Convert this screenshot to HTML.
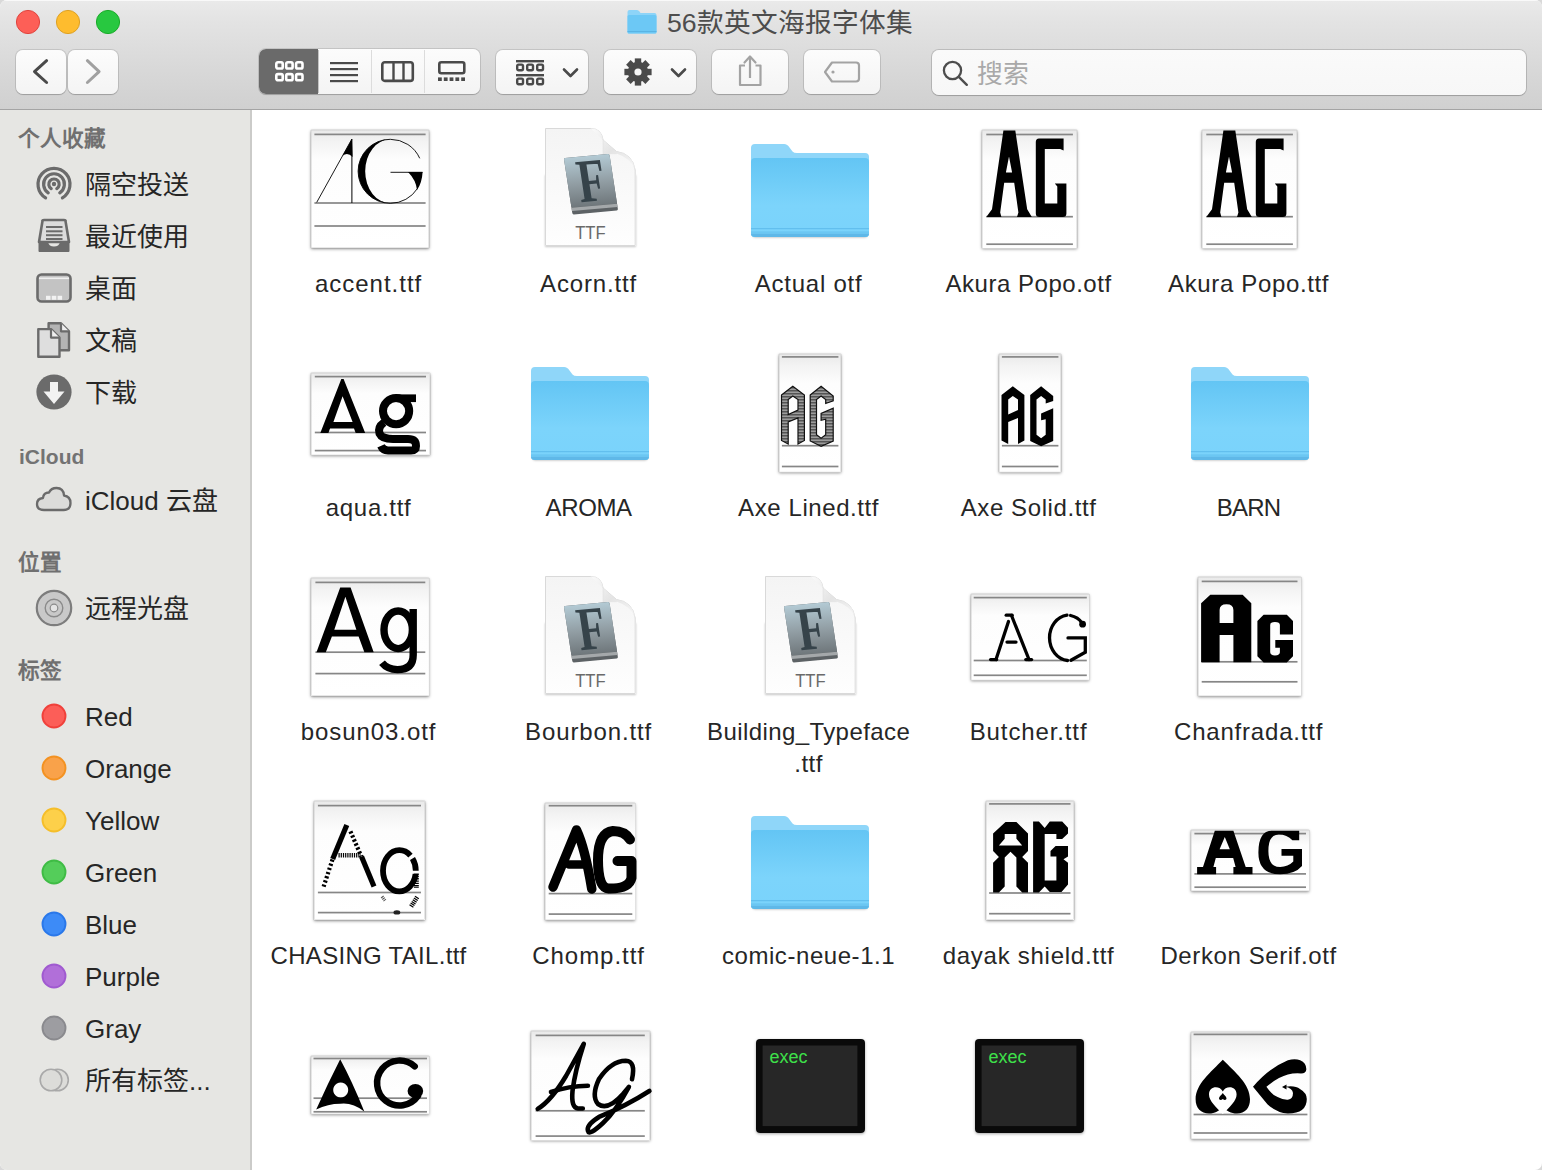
<!DOCTYPE html><html lang="zh-CN"><head><meta charset="utf-8"><title>Finder</title>
<style>
*{margin:0;padding:0;box-sizing:border-box}
html,body{width:1542px;height:1170px;overflow:hidden;background:#d9d9d9}
body{position:relative;font-family:"Liberation Sans", sans-serif;color:#222}
.win{position:absolute;left:0;top:0;width:1542px;height:1170px;border-radius:7px;overflow:hidden;background:#fff}
.a{position:absolute}
svg{position:absolute;overflow:visible}
.tb{left:0;top:0;width:1542px;height:110px;background:linear-gradient(#eaeaea 0,#e3e3e3 20%,#d9d9d9 60%,#d0d0d0 100%);border-bottom:1px solid #a4a4a4;box-shadow:inset 0 1px 0 rgba(255,255,255,.7)}
.btn{position:absolute;background:linear-gradient(#fcfcfc,#f4f4f4);border-radius:7px;box-shadow:0 0 0 1px rgba(0,0,0,.11),0 1px 1px rgba(0,0,0,.16)}
.sb{left:0;top:110px;width:252px;height:1060px;background:#e6e6e3;border-right:2px solid #cbcbc9}
.sh{position:absolute;left:18px;font-size:21.6px;font-weight:bold;color:#707070;line-height:24px;white-space:nowrap}
.si{position:absolute;left:85px;font-size:26px;color:#262626;line-height:30px;white-space:nowrap}
.lb{position:absolute;width:260px;text-align:center;font-size:24px;color:#262626;line-height:32px;white-space:nowrap}
</style></head><body><div class="win">
<div class="a tb"></div>
<svg style="left:15px;top:9px" width="26" height="26" viewBox="0 0 26 26" ><circle cx="13" cy="13" r="11.6" fill="#fd5f57" stroke="#e0443e" stroke-width="1"/></svg>
<svg style="left:55px;top:9px" width="26" height="26" viewBox="0 0 26 26" ><circle cx="13" cy="13" r="11.6" fill="#febc2e" stroke="#dea123" stroke-width="1"/></svg>
<svg style="left:95px;top:9px" width="26" height="26" viewBox="0 0 26 26" ><circle cx="13" cy="13" r="11.6" fill="#28c840" stroke="#1aab29" stroke-width="1"/></svg>
<svg style="left:626px;top:9px" width="32" height="26" viewBox="0 0 32 26" ><path d="M1.5,3 Q1.5,1 3.5,1 H11 Q12.5,1 13.5,2.5 L14.5,4 H28.5 Q30.5,4 30.5,6 V23 Q30.5,24.5 29,24.5 H3 Q1.5,24.5 1.5,23 Z" fill="#8dd4f8"/><path d="M1.5,7.5 Q1.5,6 3,6 H29 Q30.5,6 30.5,7.5 V23 Q30.5,24.5 29,24.5 H3 Q1.5,24.5 1.5,23 Z" fill="#6cc8f5"/><rect x="1.5" y="22" width="29" height="1" fill="#5ab4e4"/></svg>
<div class="a" style="left:667px;top:6px;font-size:26.7px;line-height:34px;color:#4d4d4d;white-space:nowrap">56款英文海报字体集</div>
<div class="btn" style="left:16px;top:50px;width:50px;height:44px;"></div>
<div class="btn" style="left:68px;top:50px;width:50px;height:44px;"></div>
<svg style="left:16px;top:50px" width="50" height="44" viewBox="0 0 50 44" ><path d="M30.6,10.7 L18.5,21.6 L30.6,32.5" fill="none" stroke="#4a4a4a" stroke-width="3" stroke-linecap="round" stroke-linejoin="round"/></svg>
<svg style="left:68px;top:50px" width="50" height="44" viewBox="0 0 50 44" ><path d="M19.4,10.7 L31.1,21.6 L19.4,32.5" fill="none" stroke="#a0a0a0" stroke-width="3" stroke-linecap="round" stroke-linejoin="round"/></svg>
<div class="btn" style="left:259px;top:49px;width:221px;height:45px;"></div>
<div class="a" style="left:259px;top:49px;width:59px;height:45px;background:#6a6a6a;border-radius:7px 0 0 7px"></div>
<div class="a" style="left:371px;top:50px;width:1px;height:43px;background:#dcdcdc"></div>
<div class="a" style="left:424px;top:50px;width:1px;height:43px;background:#dcdcdc"></div>
<div class="a" style="left:318px;top:50px;width:1px;height:43px;background:#c4c4c4"></div>
<svg style="left:275px;top:61px" width="32" height="22" viewBox="0 0 32 22" ><rect x="1.3" y="1.3" width="6.4" height="6.2" rx="1.6" fill="none" stroke="#fff" stroke-width="2.6"/><rect x="11.200000000000001" y="1.3" width="6.4" height="6.2" rx="1.6" fill="none" stroke="#fff" stroke-width="2.6"/><rect x="21.1" y="1.3" width="6.4" height="6.2" rx="1.6" fill="none" stroke="#fff" stroke-width="2.6"/><rect x="1.3" y="13.100000000000001" width="6.4" height="6.2" rx="1.6" fill="none" stroke="#fff" stroke-width="2.6"/><rect x="11.200000000000001" y="13.100000000000001" width="6.4" height="6.2" rx="1.6" fill="none" stroke="#fff" stroke-width="2.6"/><rect x="21.1" y="13.100000000000001" width="6.4" height="6.2" rx="1.6" fill="none" stroke="#fff" stroke-width="2.6"/></svg>
<svg style="left:330px;top:62px" width="28" height="21" viewBox="0 0 28 21" ><rect x="0" y="0" width="28" height="2.2" fill="#4a4a4a"/><rect x="0" y="6" width="28" height="2.2" fill="#4a4a4a"/><rect x="0" y="12" width="28" height="2.2" fill="#4a4a4a"/><rect x="0" y="18" width="28" height="2.2" fill="#4a4a4a"/></svg>
<svg style="left:381px;top:61px" width="34" height="22" viewBox="0 0 34 22" ><rect x="1.3" y="1.3" width="30.5" height="18.6" rx="2.5" fill="none" stroke="#4a4a4a" stroke-width="2.6"/><rect x="11.3" y="1" width="2.4" height="19" fill="#4a4a4a"/><rect x="21.3" y="1" width="2.4" height="19" fill="#4a4a4a"/></svg>
<svg style="left:438px;top:61px" width="28" height="21" viewBox="0 0 28 21" ><rect x="1.3" y="1.3" width="25" height="11" rx="2" fill="none" stroke="#4a4a4a" stroke-width="2.6"/><rect x="0.0" y="16.4" width="3.8" height="3.6" fill="#4a4a4a"/><rect x="5.8" y="16.4" width="3.8" height="3.6" fill="#4a4a4a"/><rect x="11.6" y="16.4" width="3.8" height="3.6" fill="#4a4a4a"/><rect x="17.4" y="16.4" width="3.8" height="3.6" fill="#4a4a4a"/><rect x="23.2" y="16.4" width="3.8" height="3.6" fill="#4a4a4a"/></svg>
<div class="btn" style="left:496px;top:50px;width:92px;height:44px;"></div>
<svg style="left:516px;top:60px" width="28" height="26" viewBox="0 0 28 26" ><rect x="0" y="0" width="28" height="2.4" fill="#4a4a4a"/><rect x="0" y="14" width="28" height="2.4" fill="#4a4a4a"/><rect x="1.2" y="4.6" width="5.8" height="5.6" rx="1.4" fill="none" stroke="#4a4a4a" stroke-width="2.4"/><rect x="11.2" y="4.6" width="5.8" height="5.6" rx="1.4" fill="none" stroke="#4a4a4a" stroke-width="2.4"/><rect x="21.2" y="4.6" width="5.8" height="5.6" rx="1.4" fill="none" stroke="#4a4a4a" stroke-width="2.4"/><rect x="1.2" y="18.6" width="5.8" height="5.6" rx="1.4" fill="none" stroke="#4a4a4a" stroke-width="2.4"/><rect x="11.2" y="18.6" width="5.8" height="5.6" rx="1.4" fill="none" stroke="#4a4a4a" stroke-width="2.4"/><rect x="21.2" y="18.6" width="5.8" height="5.6" rx="1.4" fill="none" stroke="#4a4a4a" stroke-width="2.4"/></svg>
<svg style="left:562px;top:67px" width="18" height="12" viewBox="0 0 18 12" ><path d="M2,2.5 L8.5,9 L15,2.5" fill="none" stroke="#4a4a4a" stroke-width="2.6" stroke-linecap="round" stroke-linejoin="round"/></svg>
<div class="btn" style="left:604px;top:50px;width:92px;height:44px;"></div>
<svg style="left:623px;top:57px" width="30" height="30" viewBox="0 0 30 30" ><circle cx="15" cy="15" r="10.2" fill="#4a4a4a"/><rect x="11.8" y="1.4000000000000004" width="6.4" height="6" fill="#4a4a4a" transform="rotate(0 15 15)"/><rect x="11.8" y="1.4000000000000004" width="6.4" height="6" fill="#4a4a4a" transform="rotate(45 15 15)"/><rect x="11.8" y="1.4000000000000004" width="6.4" height="6" fill="#4a4a4a" transform="rotate(90 15 15)"/><rect x="11.8" y="1.4000000000000004" width="6.4" height="6" fill="#4a4a4a" transform="rotate(135 15 15)"/><rect x="11.8" y="1.4000000000000004" width="6.4" height="6" fill="#4a4a4a" transform="rotate(180 15 15)"/><rect x="11.8" y="1.4000000000000004" width="6.4" height="6" fill="#4a4a4a" transform="rotate(225 15 15)"/><rect x="11.8" y="1.4000000000000004" width="6.4" height="6" fill="#4a4a4a" transform="rotate(270 15 15)"/><rect x="11.8" y="1.4000000000000004" width="6.4" height="6" fill="#4a4a4a" transform="rotate(315 15 15)"/><circle cx="15" cy="15" r="3.6" fill="#f6f6f6"/></svg>
<svg style="left:670px;top:67px" width="18" height="12" viewBox="0 0 18 12" ><path d="M2,2.5 L8.5,9 L15,2.5" fill="none" stroke="#4a4a4a" stroke-width="2.6" stroke-linecap="round" stroke-linejoin="round"/></svg>
<div class="btn" style="left:712px;top:50px;width:76px;height:44px;"></div>
<svg style="left:736px;top:54px" width="28" height="34" viewBox="0 0 28 34" ><path d="M9,11.5 H4 V31 H24.5 V11.5 H19.5" fill="none" stroke="#a3a3a3" stroke-width="2.2" stroke-linejoin="round"/><path d="M14,24 V3" fill="none" stroke="#a3a3a3" stroke-width="2.2"/><path d="M8.5,8.5 L14,2.5 L19.5,8.5" fill="none" stroke="#a3a3a3" stroke-width="2.2" stroke-linecap="round" stroke-linejoin="round"/></svg>
<div class="btn" style="left:804px;top:50px;width:76px;height:44px;"></div>
<svg style="left:822px;top:60px" width="40" height="24" viewBox="0 0 40 24" ><path d="M10,2.5 H34 Q37,2.5 37,5.5 V18.5 Q37,21.5 34,21.5 H10 L3,12 Z" fill="none" stroke="#a3a3a3" stroke-width="2.2" stroke-linejoin="round"/><circle cx="11" cy="12" r="1.6" fill="#a3a3a3"/></svg>
<div class="a" style="left:932px;top:49.5px;width:594px;height:45.5px;border-radius:7px;background:linear-gradient(#fafafa,#f7f7f7);box-shadow:0 0 0 1px rgba(0,0,0,.15),0 1px 1px rgba(0,0,0,.12)"></div>
<svg style="left:940px;top:58px" width="30" height="30" viewBox="0 0 30 30" ><circle cx="12.5" cy="12.5" r="8.6" fill="none" stroke="#4d4d4d" stroke-width="2.3"/><path d="M18.8,18.8 L26.8,26.8" stroke="#4d4d4d" stroke-width="2.4" stroke-linecap="round"/></svg>
<div class="a" style="left:977px;top:56.5px;font-size:25.8px;line-height:34px;color:#a9a9a9;white-space:nowrap">搜索</div>
<div class="a sb"></div>
<div class="sh" style="top:127.0px">个人收藏</div>
<div class="si" style="top:170.0px">隔空投送</div>
<div class="si" style="top:222.0px">最近使用</div>
<div class="si" style="top:274.0px">桌面</div>
<div class="si" style="top:326.0px">文稿</div>
<div class="si" style="top:378.0px">下载</div>
<svg style="left:34px;top:164px" width="40" height="40" viewBox="0 0 40 40" ><g fill="none" stroke="#6b6b6b" stroke-width="3.2" stroke-linecap="round"><path d="M11.6,33.9 A16,16 0 1 1 28.4,33.9"/><path d="M14.2,28.8 A10.4,10.4 0 1 1 25.8,28.8"/><path d="M17.2,24.6 A5.2,5.2 0 1 1 22.8,24.6"/></g><circle cx="20" cy="20" r="2.2" fill="#6b6b6b"/></svg>
<svg style="left:36px;top:218px" width="36" height="36" viewBox="0 0 36 36" ><path d="M6.5,3 Q6.5,2 8,2 H28 Q29.5,2 29.5,3 L33,24 H3 Z" fill="#dcdcdc" stroke="#6b6b6b" stroke-width="2.6" stroke-linejoin="round"/><g fill="#6b6b6b"><rect x="10" y="8" width="16.5" height="2"/><rect x="10" y="12.3" width="16.5" height="2"/><rect x="10" y="16.2" width="16.5" height="2"/><rect x="10" y="20" width="16.5" height="2"/></g><path d="M2.5,24 H12 Q13,28.5 18,28.5 Q23,28.5 24,24 H33.5 V33 Q33.5,34 32.5,34 H3.5 Q2.5,34 2.5,33 Z" fill="#6b6b6b"/></svg>
<svg style="left:36px;top:273px" width="36" height="30" viewBox="0 0 36 30" ><rect x="1.5" y="1.5" width="33" height="27" rx="4" fill="#c3c3c3" stroke="#6b6b6b" stroke-width="2.6"/><rect x="3" y="4.5" width="30" height="1.6" fill="#f0f0f0"/><g fill="#f2f2f2"><rect x="10" y="22.8" width="4.5" height="4"/><rect x="15.8" y="22.8" width="4.5" height="4"/><rect x="21.6" y="22.8" width="4.5" height="4"/></g></svg>
<svg style="left:36px;top:322px" width="36" height="36" viewBox="0 0 36 36" ><path d="M12.6,1.3 H25 L33,9.3 V28.3 H12.6 Z" fill="#b4b4b4" stroke="#6b6b6b" stroke-width="2.4" stroke-linejoin="round"/><path d="M25,1.3 V9.3 H33" fill="#efefef" stroke="#6b6b6b" stroke-width="2.2" stroke-linejoin="round"/><path d="M2.3,7.1 H15 L23.5,15.6 V34.7 H2.3 Z" fill="#dedede" stroke="#6b6b6b" stroke-width="2.4" stroke-linejoin="round"/><path d="M15,7.1 V15.6 H23.5" fill="#efefef" stroke="#6b6b6b" stroke-width="2.2" stroke-linejoin="round"/></svg>
<svg style="left:35px;top:372.8px" width="38" height="38" viewBox="0 0 38 38" ><circle cx="19" cy="19" r="17.6" fill="#6b6b6b"/><path d="M15,9 H23 V18.5 H29.5 L19,31 L8.5,18.5 H15 Z" fill="#f2f2f2"/></svg>
<div class="sh" style="font-weight:bold;font-size:21px;left:19px;color:#737373;top:445.4px">iCloud</div>
<div class="si" style="top:485.8px">iCloud 云盘</div>
<svg style="left:35px;top:484px" width="38" height="30" viewBox="0 0 38 30" ><path d="M9,26 Q2,26 2,20 Q2,14.5 8,14 Q8.5,8.5 14,8.5 Q16,4 21.5,4 Q28.5,4 29,11.5 Q35.5,12.5 35.5,19 Q35.5,26 28.5,26 Z" fill="#dcdcda" stroke="#6b6b6b" stroke-width="2.3" stroke-linejoin="round"/></svg>
<div class="sh" style="top:551.1px">位置</div>
<div class="si" style="top:593.6px">远程光盘</div>
<svg style="left:35px;top:589px" width="38" height="38" viewBox="0 0 38 38" ><circle cx="19" cy="19" r="17.2" fill="#c9c9c9" stroke="#7d7d7d" stroke-width="2.2"/><circle cx="19" cy="19" r="8.8" fill="none" stroke="#8a8a8a" stroke-width="1.4"/><circle cx="19" cy="19" r="3.8" fill="#e4e4e4" stroke="#8a8a8a" stroke-width="1.2"/></svg>
<div class="sh" style="top:659.1px">标签</div>
<div class="si" style="top:701.6px">Red</div>
<svg style="left:41px;top:703.3px" width="26" height="26" viewBox="0 0 26 26" ><circle cx="13" cy="13" r="11.5" fill="#fc5e58" stroke="#f0413b" stroke-width="1.9"/></svg>
<div class="si" style="top:753.6px">Orange</div>
<svg style="left:41px;top:755.3px" width="26" height="26" viewBox="0 0 26 26" ><circle cx="13" cy="13" r="11.5" fill="#f9a24a" stroke="#f39222" stroke-width="1.9"/></svg>
<div class="si" style="top:805.6px">Yellow</div>
<svg style="left:41px;top:807.3px" width="26" height="26" viewBox="0 0 26 26" ><circle cx="13" cy="13" r="11.5" fill="#fdd04a" stroke="#f5be2a" stroke-width="1.9"/></svg>
<div class="si" style="top:857.6px">Green</div>
<svg style="left:41px;top:859.3px" width="26" height="26" viewBox="0 0 26 26" ><circle cx="13" cy="13" r="11.5" fill="#54cd5a" stroke="#3fbc45" stroke-width="1.9"/></svg>
<div class="si" style="top:909.6px">Blue</div>
<svg style="left:41px;top:911.3px" width="26" height="26" viewBox="0 0 26 26" ><circle cx="13" cy="13" r="11.5" fill="#3d8bf7" stroke="#2a78ea" stroke-width="1.9"/></svg>
<div class="si" style="top:961.6px">Purple</div>
<svg style="left:41px;top:963.3px" width="26" height="26" viewBox="0 0 26 26" ><circle cx="13" cy="13" r="11.5" fill="#b16fd9" stroke="#a05ad0" stroke-width="1.9"/></svg>
<div class="si" style="top:1013.6px">Gray</div>
<svg style="left:41px;top:1015.3px" width="26" height="26" viewBox="0 0 26 26" ><circle cx="13" cy="13" r="11.5" fill="#9d9da1" stroke="#8a8a8e" stroke-width="1.9"/></svg>
<div class="si" style="top:1065.6px">所有标签...</div>
<svg style="left:38px;top:1067.3px" width="34" height="26" viewBox="0 0 34 26" ><circle cx="19.5" cy="13" r="10.8" fill="#dcdcd9" stroke="#a9a9a9" stroke-width="1.6"/><circle cx="13" cy="13" r="10.8" fill="#dcdcd9" stroke="#a9a9a9" stroke-width="1.6"/></svg>
<svg width="0" height="0" style="position:absolute;left:0;top:0">
<defs>
<linearGradient id="pvg" x1="0" y1="0" x2="0" y2="1">
 <stop offset="0" stop-color="#e9e9e9"/><stop offset="0.1" stop-color="#f3f3f3"/><stop offset="0.25" stop-color="#fdfdfd"/><stop offset="1" stop-color="#ffffff"/>
</linearGradient>
<linearGradient id="fld" x1="0" y1="0" x2="0" y2="1">
 <stop offset="0" stop-color="#63c5f4"/><stop offset="0.6" stop-color="#7cd4fb"/><stop offset="1" stop-color="#7ad3fb"/>
</linearGradient>
<linearGradient id="book" x1="0" y1="0" x2="0" y2="1">
 <stop offset="0" stop-color="#b3cad4"/><stop offset="0.55" stop-color="#909ca2"/><stop offset="1" stop-color="#6f777b"/>
</linearGradient>
<linearGradient id="page" x1="0" y1="0" x2="0" y2="1">
 <stop offset="0" stop-color="#f4f4f4"/><stop offset="1" stop-color="#fefefe"/>
</linearGradient>
<linearGradient id="curl" x1="0" y1="0" x2="1" y2="1">
 <stop offset="0" stop-color="#fbfbfb"/><stop offset="0.5" stop-color="#e2e2e2"/><stop offset="1" stop-color="#f6f6f6"/>
</linearGradient>
<pattern id="stripe" width="4" height="3" patternUnits="userSpaceOnUse">
 <rect width="4" height="3" fill="#9c9c9c"/><rect width="4" height="1.5" fill="#555"/>
</pattern>
</defs></svg>
<div class="a" style="left:311px;top:130px;width:118px;height:118px;box-shadow:0 1px 3px rgba(0,0,0,.45),0 0 1px rgba(0,0,0,.3)"></div><svg style="left:311px;top:130px" width="118" height="118" viewBox="0 0 118 118" ><rect x="0" y="0" width="118" height="118" fill="url(#pvg)"/><rect x="0.25" y="0.25" width="117.5" height="117.5" fill="none" stroke="#d0d0d0" stroke-width="0.5"/><rect x="3.4" y="3.55" width="111.20" height="1.7" fill="#868686"/><rect x="3.4" y="72.15" width="111.20" height="1.7" fill="#868686"/><rect x="3.4" y="95.15" width="111.20" height="1.7" fill="#868686"/><path d="M5.7,72.4 L40.9,9" stroke="#000" stroke-width="0.9" fill="none"/><path d="M40.9,9 V73" stroke="#000" stroke-width="1" fill="none"/><path d="M40.9,9 L31.5,25.8 Q36.5,21.5 41.6,27 Z" fill="#000"/><ellipse cx="79.3" cy="41.3" rx="32.2" ry="32" fill="none" stroke="#000" stroke-width="0.9" stroke-dasharray="170 30" stroke-dashoffset="-18"/><path d="M79.3,9.3 A32.2,32 0 0 0 79.3,73.3 A24.8,31.6 0 0 1 79.3,9.3 Z" fill="#000"/><path d="M79.5,42.3 H111.5" stroke="#000" stroke-width="0.9"/><path d="M97,42 H111.6 Q111,53 106,60 Q105,50 97,42 Z" fill="#000"/></svg>
<div class="a" style="left:545px;top:174px;width:91px;height:72px;box-shadow:0 1px 2px rgba(0,0,0,.22)"></div><svg style="left:545px;top:128px" width="91" height="118" viewBox="0 0 91 118" ><path d="M0.5,0.5 H45.8 Q56.5,0.5 58.1,12 L71.5,23.5 Q87.5,25.5 90.2,42 V117.5 H0.5 Z" fill="url(#page)" stroke="#d9d9d9" stroke-width="1"/><path d="M45.8,0.5 Q56.5,0.5 58.1,12 L71.5,23.5 Q87.5,25.5 90.2,42 Q86,30 72,25.7 H58.1 V12 Z" fill="url(#curl)" opacity="0.9"/><path d="M58.1,12 V25.7 H71.5" fill="none" stroke="#e2e2e2" stroke-width="0.8"/><g transform="matrix(0.456,-0.04,0.087,0.565,18.8,30)"><rect x="0" y="0" width="100" height="100" rx="3" fill="#5d6265"/><rect x="0" y="0" width="100" height="88" rx="3" fill="url(#book)"/><rect x="0" y="88" width="100" height="6" fill="#a4a8aa"/><text x="52" y="80" text-anchor="middle" font-family="Liberation Serif" font-weight="bold" font-size="108" fill="#36434a" transform="translate(52 0) scale(0.92 1) translate(-52 0)">F</text></g><text x="30.2" y="111" textLength="30.5" lengthAdjust="spacingAndGlyphs" font-family="Liberation Sans" font-size="18.5" fill="#6a6a6a">TTF</text></svg>
<div class="a" style="left:752px;top:158px;width:116px;height:79px;border-radius:4px;box-shadow:0 1px 2px rgba(0,0,0,.18)"></div><svg style="left:751px;top:144px" width="118" height="93" viewBox="0 0 118 93" ><path d="M0,4 Q0,0 4,0 H33 Q36.5,0 38.5,3.5 L41.5,7.5 Q43,9 46,9 H114 Q118,9 118,13 V89 Q118,93 114,93 H4 Q0,93 0,89 Z" fill="#8fd6f9"/><path d="M0,18 Q0,14 4,14 H114 Q118,14 118,18 V89 Q118,93 114,93 H4 Q0,93 0,89 Z" fill="url(#fld)"/><rect x="0" y="84" width="118" height="1.2" fill="#62bfee"/><rect x="0" y="87.5" width="118" height="1.2" fill="#66c2f0"/><path d="M0,89.5 H118 Q118,93 114,93 H4 Q0,93 0,89.5 Z" fill="#5fb8e8"/></svg>
<div class="a" style="left:982px;top:129.5px;width:95px;height:118.5px;box-shadow:0 1px 3px rgba(0,0,0,.45),0 0 1px rgba(0,0,0,.3)"></div><svg style="left:982px;top:129.5px" width="95" height="118.5" viewBox="0 0 95 118.5" ><rect x="0" y="0" width="95" height="118.5" fill="url(#pvg)"/><rect x="0.25" y="0.25" width="94.5" height="118.0" fill="none" stroke="#d0d0d0" stroke-width="0.5"/><rect x="4.3" y="3.65" width="86.60" height="1.7" fill="#868686"/><rect x="4.3" y="85.85" width="86.60" height="1.7" fill="#868686"/><rect x="4.3" y="113.35" width="86.60" height="1.7" fill="#868686"/><path d="M21.4,0.6 H33.3 L45.2,79.3 L49.8,87 H35 L36.4,82.4 L32.2,52.8 H22.2 L18.2,82.4 L19.4,87 H4.3 L10,79.3 Z M27,26.5 L30.1,42.6 H23.9 Z" fill="#000" fill-rule="evenodd"/><path d="M57,8.5 H81.6 V20.5 L78.2,19 H62.8 V73.4 H75.3 V56.5 L72.8,53.4 H84.4 V83.5 Q84.4,87 80.8,87 H57.4 Q53.8,87 53.8,83.5 V12 Q53.8,8.5 57,8.5 Z" fill="#000"/></svg>
<div class="a" style="left:1202px;top:129.5px;width:95px;height:118.5px;box-shadow:0 1px 3px rgba(0,0,0,.45),0 0 1px rgba(0,0,0,.3)"></div><svg style="left:1202px;top:129.5px" width="95" height="118.5" viewBox="0 0 95 118.5" ><rect x="0" y="0" width="95" height="118.5" fill="url(#pvg)"/><rect x="0.25" y="0.25" width="94.5" height="118.0" fill="none" stroke="#d0d0d0" stroke-width="0.5"/><rect x="4.3" y="3.65" width="86.60" height="1.7" fill="#868686"/><rect x="4.3" y="85.85" width="86.60" height="1.7" fill="#868686"/><rect x="4.3" y="113.35" width="86.60" height="1.7" fill="#868686"/><path d="M21.4,0.6 H33.3 L45.2,79.3 L49.8,87 H35 L36.4,82.4 L32.2,52.8 H22.2 L18.2,82.4 L19.4,87 H4.3 L10,79.3 Z M27,26.5 L30.1,42.6 H23.9 Z" fill="#000" fill-rule="evenodd"/><path d="M57,8.5 H81.6 V20.5 L78.2,19 H62.8 V73.4 H75.3 V56.5 L72.8,53.4 H84.4 V83.5 Q84.4,87 80.8,87 H57.4 Q53.8,87 53.8,83.5 V12 Q53.8,8.5 57,8.5 Z" fill="#000"/></svg>
<div class="a" style="left:311px;top:372.7px;width:118.5px;height:82.2px;box-shadow:0 1px 3px rgba(0,0,0,.45),0 0 1px rgba(0,0,0,.3)"></div><svg style="left:311px;top:372.7px" width="118.5" height="82.2" viewBox="0 0 118.5 82.2" ><rect x="0" y="0" width="118.5" height="82.2" fill="url(#pvg)"/><rect x="0.25" y="0.25" width="118.0" height="81.7" fill="none" stroke="#d0d0d0" stroke-width="0.5"/><rect x="3.8" y="2.75" width="111.20" height="1.7" fill="#868686"/><rect x="3.8" y="58.65" width="111.20" height="1.7" fill="#868686"/><rect x="3.8" y="76.75" width="111.20" height="1.7" fill="#868686"/><path d="M30.3,5.9 H32.6 L54.2,59.9 H44.7 L43,55.4 H19 L17.4,59.9 H9.3 Z M31.6,23.2 L41.6,49 H22.4 Z" fill="#000" fill-rule="evenodd"/><circle cx="85.1" cy="38.1" r="13.1" fill="none" stroke="#000" stroke-width="8"/><rect x="84.6" y="21.4" width="20.4" height="7.7" fill="#000"/><path d="M73,49.5 Q66.5,54 68.5,60.5 Q71,66 82,66 H97 Q105,66 105,73 Q105,77.5 100,77.5 H77 Q72,77.5 70,73" fill="none" stroke="#000" stroke-width="8"/></svg>
<div class="a" style="left:532px;top:381.3px;width:116px;height:79px;border-radius:4px;box-shadow:0 1px 2px rgba(0,0,0,.18)"></div><svg style="left:531px;top:367.3px" width="118" height="93" viewBox="0 0 118 93" ><path d="M0,4 Q0,0 4,0 H33 Q36.5,0 38.5,3.5 L41.5,7.5 Q43,9 46,9 H114 Q118,9 118,13 V89 Q118,93 114,93 H4 Q0,93 0,89 Z" fill="#8fd6f9"/><path d="M0,18 Q0,14 4,14 H114 Q118,14 118,18 V89 Q118,93 114,93 H4 Q0,93 0,89 Z" fill="url(#fld)"/><rect x="0" y="84" width="118" height="1.2" fill="#62bfee"/><rect x="0" y="87.5" width="118" height="1.2" fill="#66c2f0"/><path d="M0,89.5 H118 Q118,93 114,93 H4 Q0,93 0,89.5 Z" fill="#5fb8e8"/></svg>
<div class="a" style="left:778.7px;top:353.6px;width:62px;height:118.3px;box-shadow:0 1px 3px rgba(0,0,0,.45),0 0 1px rgba(0,0,0,.3)"></div><svg style="left:778.7px;top:353.6px" width="62" height="118.3" viewBox="0 0 62 118.3" ><rect x="0" y="0" width="62" height="118.3" fill="url(#pvg)"/><rect x="0.25" y="0.25" width="61.5" height="117.8" fill="none" stroke="#d0d0d0" stroke-width="0.5"/><rect x="2.9" y="2.05" width="56.50" height="1.7" fill="#868686"/><rect x="2.9" y="90.85" width="56.50" height="1.7" fill="#868686"/><rect x="2.9" y="111.65" width="56.50" height="1.7" fill="#868686"/><path d="M2.5,41 L13.8,32.3 L25.4,41 V86.5 L19,90 V64 L9.2,68 V90 L2.5,86.5 Z M9.2,45.6 L13.8,42.1 L19,45.6 V56 L9.2,60.6 Z" fill="url(#stripe)" stroke="#111" stroke-width="1.2" fill-rule="evenodd"/><path d="M31.2,41 L42.1,32.3 L54.2,42.1 V46.9 L46.7,49.5 V45.6 L42.1,42.1 L37.5,45.6 V80.8 L42.1,84.2 L46.7,80.8 V65.2 L42.1,66.3 V59.4 L54.2,54.2 V87 L42.1,92.3 L31.2,87 Z" fill="url(#stripe)" stroke="#111" stroke-width="1.2"/></svg>
<div class="a" style="left:999px;top:353.6px;width:62px;height:118.3px;box-shadow:0 1px 3px rgba(0,0,0,.45),0 0 1px rgba(0,0,0,.3)"></div><svg style="left:999px;top:353.6px" width="62" height="118.3" viewBox="0 0 62 118.3" ><rect x="0" y="0" width="62" height="118.3" fill="url(#pvg)"/><rect x="0.25" y="0.25" width="61.5" height="117.8" fill="none" stroke="#d0d0d0" stroke-width="0.5"/><rect x="2.9" y="2.05" width="56.50" height="1.7" fill="#868686"/><rect x="2.9" y="90.85" width="56.50" height="1.7" fill="#868686"/><rect x="2.9" y="111.65" width="56.50" height="1.7" fill="#868686"/><path d="M2.5,41 L13.8,32.3 L25.4,41 V86.5 L19,90 V64 L9.2,68 V90 L2.5,86.5 Z M9.2,45.6 L13.8,42.1 L19,45.6 V56 L9.2,60.6 Z" fill="#000" fill-rule="evenodd"/><path d="M31.2,41 L42.1,32.3 L54.2,42.1 V46.9 L46.7,49.5 V45.6 L42.1,42.1 L37.5,45.6 V80.8 L42.1,84.2 L46.7,80.8 V65.2 L42.1,66.3 V59.4 L54.2,54.2 V87 L42.1,92.3 L31.2,87 Z" fill="#000"/></svg>
<div class="a" style="left:1192px;top:381.3px;width:116px;height:79px;border-radius:4px;box-shadow:0 1px 2px rgba(0,0,0,.18)"></div><svg style="left:1191px;top:367.3px" width="118" height="93" viewBox="0 0 118 93" ><path d="M0,4 Q0,0 4,0 H33 Q36.5,0 38.5,3.5 L41.5,7.5 Q43,9 46,9 H114 Q118,9 118,13 V89 Q118,93 114,93 H4 Q0,93 0,89 Z" fill="#8fd6f9"/><path d="M0,18 Q0,14 4,14 H114 Q118,14 118,18 V89 Q118,93 114,93 H4 Q0,93 0,89 Z" fill="url(#fld)"/><rect x="0" y="84" width="118" height="1.2" fill="#62bfee"/><rect x="0" y="87.5" width="118" height="1.2" fill="#66c2f0"/><path d="M0,89.5 H118 Q118,93 114,93 H4 Q0,93 0,89.5 Z" fill="#5fb8e8"/></svg>
<div class="a" style="left:310.6px;top:578.3px;width:118.4px;height:117.7px;box-shadow:0 1px 3px rgba(0,0,0,.45),0 0 1px rgba(0,0,0,.3)"></div><svg style="left:310.6px;top:578.3px" width="118.4" height="117.7" viewBox="0 0 118.4 117.7" ><rect x="0" y="0" width="118.4" height="117.7" fill="url(#pvg)"/><rect x="0.25" y="0.25" width="117.9" height="117.2" fill="none" stroke="#d0d0d0" stroke-width="0.5"/><rect x="4.4" y="3.55" width="109.90" height="1.7" fill="#868686"/><rect x="4.4" y="73.35" width="109.90" height="1.7" fill="#868686"/><rect x="4.4" y="94.75" width="109.90" height="1.7" fill="#868686"/><path d="M29.2,9.6 H39.6 L62.7,74.2 H53.4 L47.6,58.6 H20.9 L14.8,74.2 H5.5 Z M34.4,18.8 L45.4,51.8 H23.3 Z" fill="#000" fill-rule="evenodd"/><ellipse cx="87.2" cy="51.8" rx="14.2" ry="18.8" fill="none" stroke="#000" stroke-width="7.4"/><path d="M102.2,30.9 V77 Q102.2,91.6 86.5,91.6 Q76.5,91.6 71,84.8" fill="none" stroke="#000" stroke-width="7.4"/></svg>
<div class="a" style="left:545px;top:622px;width:91px;height:72px;box-shadow:0 1px 2px rgba(0,0,0,.22)"></div><svg style="left:545px;top:576px" width="91" height="118" viewBox="0 0 91 118" ><path d="M0.5,0.5 H45.8 Q56.5,0.5 58.1,12 L71.5,23.5 Q87.5,25.5 90.2,42 V117.5 H0.5 Z" fill="url(#page)" stroke="#d9d9d9" stroke-width="1"/><path d="M45.8,0.5 Q56.5,0.5 58.1,12 L71.5,23.5 Q87.5,25.5 90.2,42 Q86,30 72,25.7 H58.1 V12 Z" fill="url(#curl)" opacity="0.9"/><path d="M58.1,12 V25.7 H71.5" fill="none" stroke="#e2e2e2" stroke-width="0.8"/><g transform="matrix(0.456,-0.04,0.087,0.565,18.8,30)"><rect x="0" y="0" width="100" height="100" rx="3" fill="#5d6265"/><rect x="0" y="0" width="100" height="88" rx="3" fill="url(#book)"/><rect x="0" y="88" width="100" height="6" fill="#a4a8aa"/><text x="52" y="80" text-anchor="middle" font-family="Liberation Serif" font-weight="bold" font-size="108" fill="#36434a" transform="translate(52 0) scale(0.92 1) translate(-52 0)">F</text></g><text x="30.2" y="111" textLength="30.5" lengthAdjust="spacingAndGlyphs" font-family="Liberation Sans" font-size="18.5" fill="#6a6a6a">TTF</text></svg>
<div class="a" style="left:765px;top:622px;width:91px;height:72px;box-shadow:0 1px 2px rgba(0,0,0,.22)"></div><svg style="left:765px;top:576px" width="91" height="118" viewBox="0 0 91 118" ><path d="M0.5,0.5 H45.8 Q56.5,0.5 58.1,12 L71.5,23.5 Q87.5,25.5 90.2,42 V117.5 H0.5 Z" fill="url(#page)" stroke="#d9d9d9" stroke-width="1"/><path d="M45.8,0.5 Q56.5,0.5 58.1,12 L71.5,23.5 Q87.5,25.5 90.2,42 Q86,30 72,25.7 H58.1 V12 Z" fill="url(#curl)" opacity="0.9"/><path d="M58.1,12 V25.7 H71.5" fill="none" stroke="#e2e2e2" stroke-width="0.8"/><g transform="matrix(0.456,-0.04,0.087,0.565,18.8,30)"><rect x="0" y="0" width="100" height="100" rx="3" fill="#5d6265"/><rect x="0" y="0" width="100" height="88" rx="3" fill="url(#book)"/><rect x="0" y="88" width="100" height="6" fill="#a4a8aa"/><text x="52" y="80" text-anchor="middle" font-family="Liberation Serif" font-weight="bold" font-size="108" fill="#36434a" transform="translate(52 0) scale(0.92 1) translate(-52 0)">F</text></g><text x="30.2" y="111" textLength="30.5" lengthAdjust="spacingAndGlyphs" font-family="Liberation Sans" font-size="18.5" fill="#6a6a6a">TTF</text></svg>
<div class="a" style="left:970.9px;top:593.6px;width:118.5px;height:86.3px;box-shadow:0 1px 3px rgba(0,0,0,.45),0 0 1px rgba(0,0,0,.3)"></div><svg style="left:970.9px;top:593.6px" width="118.5" height="86.3" viewBox="0 0 118.5 86.3" ><rect x="0" y="0" width="118.5" height="86.3" fill="url(#pvg)"/><rect x="0.25" y="0.25" width="118.0" height="85.8" fill="none" stroke="#d0d0d0" stroke-width="0.5"/><rect x="2.7" y="2.75" width="113.10" height="1.7" fill="#868686"/><rect x="2.7" y="65.65" width="113.10" height="1.7" fill="#868686"/><rect x="2.7" y="80.45" width="113.10" height="1.7" fill="#868686"/><g fill="none" stroke="#000" stroke-width="3.3" stroke-linecap="round"><path d="M37.5,27.5 L25,65.5"/><path d="M40.5,21.5 L58,65.5"/><path d="M35.2,21.2 H41.2"/><path d="M19.6,65.6 H25.6"/><path d="M54.8,65.6 H60.6"/><path d="M36,48.1 H45"/><path d="M96,21.2 A20,22.8 0 0 0 96.5,66.5"/><path d="M99.6,21.5 Q107,23 111,29"/><path d="M97,43.9 H114.3 V58.3 L100,66.3"/></g><circle cx="111.6" cy="30.2" r="3.4" fill="#000"/></svg>
<div class="a" style="left:1197.8px;top:577.2px;width:103.5px;height:119.1px;box-shadow:0 1px 3px rgba(0,0,0,.45),0 0 1px rgba(0,0,0,.3)"></div><svg style="left:1197.8px;top:577.2px" width="103.5" height="119.1" viewBox="0 0 103.5 119.1" ><rect x="0" y="0" width="103.5" height="119.1" fill="url(#pvg)"/><rect x="0.25" y="0.25" width="103.0" height="118.6" fill="none" stroke="#d0d0d0" stroke-width="0.5"/><rect x="3.7" y="3.55" width="95.80" height="1.7" fill="#868686"/><rect x="3.7" y="83.95" width="95.80" height="1.7" fill="#868686"/><rect x="3.7" y="103.95" width="95.80" height="1.7" fill="#868686"/><path d="M3.1,85.2 V26.3 L12.3,17.7 H44.6 L53.3,26.3 V85.2 H35.4 V58 H21.6 V85.2 Z M21.6,45.9 V33 Q21.6,27.3 28.5,27.3 Q35.4,27.3 35.4,33 V45.9 Z" fill="#000" fill-rule="evenodd"/><path d="M65.6,37.7 H88.8 L95,43.9 V57.4 H81.9 V48 Q81.9,44.9 77,44.9 Q72.2,44.9 72.2,48 V75.3 Q72.2,78.4 77,78.4 Q81.9,78.4 81.9,75.3 V70.7 H77.3 V63.1 H95 V79.2 L88.8,85.4 H65.6 L59.4,79.2 V43.9 Z" fill="#000"/></svg>
<div class="a" style="left:314px;top:801.3px;width:111px;height:118.9px;box-shadow:0 1px 3px rgba(0,0,0,.45),0 0 1px rgba(0,0,0,.3)"></div><svg style="left:314px;top:801.3px" width="111" height="118.9" viewBox="0 0 111 118.9" ><rect x="0" y="0" width="111" height="118.9" fill="url(#pvg)"/><rect x="0.25" y="0.25" width="110.5" height="118.4" fill="none" stroke="#d0d0d0" stroke-width="0.5"/><rect x="3.9" y="3.75" width="103.10" height="1.7" fill="#868686"/><rect x="3.9" y="90.65" width="103.10" height="1.7" fill="#868686"/><rect x="3.9" y="110.75" width="103.10" height="1.7" fill="#868686"/><g fill="none" stroke="#000" stroke-width="5.2"><path d="M32.8,24 L18.7,58"/><path d="M18.5,58.5 L9.5,86" stroke-dasharray="2.2 2.2" stroke-width="4.2"/><path d="M36.4,30.3 L47.3,55.5" stroke-dasharray="2.4 2" stroke-width="4.2"/><path d="M47.5,55.5 L60,85.5"/><path d="M24.5,54.3 H47" stroke-dasharray="1.2 1" stroke-width="4.5"/><ellipse cx="85.4" cy="69.8" rx="16.4" ry="20.6" stroke-width="5.8" stroke-dasharray="96 3.5 14 3.5" stroke-dashoffset="-3.5"/><path d="M102.3,72.5 V87" stroke-width="5" stroke-dasharray="1.4 0.9"/><path d="M103.2,96.1 L96.7,106.2" stroke-dasharray="1.2 0.8" stroke-width="4.6"/><path d="M68,95.5 L71,99.5" stroke-dasharray="1.2 0.8" stroke-width="3.2" stroke="#555"/></g><ellipse cx="82.9" cy="111.4" rx="3.4" ry="2.2" fill="#222"/></svg>
<div class="a" style="left:544.7px;top:802.5px;width:90.8px;height:117.1px;box-shadow:0 1px 3px rgba(0,0,0,.45),0 0 1px rgba(0,0,0,.3)"></div><svg style="left:544.7px;top:802.5px" width="90.8" height="117.1" viewBox="0 0 90.8 117.1" ><rect x="0" y="0" width="90.8" height="117.1" fill="url(#pvg)"/><rect x="0.25" y="0.25" width="90.3" height="116.6" fill="none" stroke="#d0d0d0" stroke-width="0.5"/><rect x="3.7" y="1.85" width="83.60" height="1.7" fill="#868686"/><rect x="3.7" y="89.75" width="83.60" height="1.7" fill="#868686"/><rect x="3.7" y="110.25" width="83.60" height="1.7" fill="#868686"/><g fill="none" stroke="#000" stroke-linecap="round" stroke-linejoin="round"><path d="M8,84 Q20,55 31.5,27 Q40,45 46.8,86" stroke-width="9.5"/><path d="M24,61.5 H42" stroke-width="8.5"/><path d="M85,36.5 Q80,28 68,28 Q53,30 53,57 Q53,85 63.5,85.5 Q84,86 86.5,75 V58 H72.5" stroke-width="10"/></g></svg>
<div class="a" style="left:752px;top:829.5px;width:116px;height:79px;border-radius:4px;box-shadow:0 1px 2px rgba(0,0,0,.18)"></div><svg style="left:751px;top:815.5px" width="118" height="93" viewBox="0 0 118 93" ><path d="M0,4 Q0,0 4,0 H33 Q36.5,0 38.5,3.5 L41.5,7.5 Q43,9 46,9 H114 Q118,9 118,13 V89 Q118,93 114,93 H4 Q0,93 0,89 Z" fill="#8fd6f9"/><path d="M0,18 Q0,14 4,14 H114 Q118,14 118,18 V89 Q118,93 114,93 H4 Q0,93 0,89 Z" fill="url(#fld)"/><rect x="0" y="84" width="118" height="1.2" fill="#62bfee"/><rect x="0" y="87.5" width="118" height="1.2" fill="#66c2f0"/><path d="M0,89.5 H118 Q118,93 114,93 H4 Q0,93 0,89.5 Z" fill="#5fb8e8"/></svg>
<div class="a" style="left:985.8px;top:801.3px;width:88px;height:118.9px;box-shadow:0 1px 3px rgba(0,0,0,.45),0 0 1px rgba(0,0,0,.3)"></div><svg style="left:985.8px;top:801.3px" width="88" height="118.9" viewBox="0 0 88 118.9" ><rect x="0" y="0" width="88" height="118.9" fill="url(#pvg)"/><rect x="0.25" y="0.25" width="87.5" height="118.4" fill="none" stroke="#d0d0d0" stroke-width="0.5"/><rect x="3.1" y="2.05" width="81.40" height="1.7" fill="#868686"/><rect x="3.1" y="91.15" width="81.40" height="1.7" fill="#868686"/><rect x="3.1" y="111.85" width="81.40" height="1.7" fill="#868686"/><path d="M7.1,32.6 L19.5,21 H30.4 L42,32.6 V50 L36.2,55.9 L42,61.7 V91.5 H36.2 L30.4,85.6 V56.6 L24.5,50.8 L18.7,56.6 V85.6 L12.9,91.5 H7.1 V61.7 L12.9,55.9 L7.1,50 Z M18.7,33 H30.4 V37.7 L36.2,44.6 H12.9 L18.7,37.7 Z" fill="#000" fill-rule="evenodd"/><path d="M47.1,20.6 H52.9 L58.7,27.1 L63.8,20.6 H76.2 L82,26.8 V32.6 L76.2,38 H70.4 V33 H58.7 V79.5 H70.4 V55.5 H64.5 V50 L69.6,45 H82 V55.5 L77.5,58.2 L82,61.7 V83.5 L75.5,91.1 H63.8 L58.7,85.6 L52.9,91.5 H47.1 Z" fill="#000"/></svg>
<div class="a" style="left:1190.7px;top:830.2px;width:118.7px;height:61.1px;box-shadow:0 1px 3px rgba(0,0,0,.45),0 0 1px rgba(0,0,0,.3)"></div><svg style="left:1190.7px;top:830.2px" width="118.7" height="61.1" viewBox="0 0 118.7 61.1" ><rect x="0" y="0" width="118.7" height="61.1" fill="url(#pvg)"/><rect x="0.25" y="0.25" width="118.2" height="60.6" fill="none" stroke="#d0d0d0" stroke-width="0.5"/><rect x="3.4" y="2.75" width="111.60" height="1.7" fill="#868686"/><rect x="3.4" y="43.05" width="111.60" height="1.7" fill="#868686"/><rect x="3.4" y="56.35" width="111.60" height="1.7" fill="#868686"/><path d="M23.8,0.7 H42.4 L54.7,37 H61.5 V44.3 H42.4 V37 H44.6 L42.2,28 H24.8 L22.4,37 H25.1 V44.3 H6.1 V37 H12 Z M33.8,7 L38.8,19.2 H28.6 Z" fill="#000" fill-rule="evenodd"/><path d="M81,0.7 H108.2 V10.3 H101.4 Q96,4.4 87.8,4.4 Q77.4,4.4 77.4,21 Q77.4,37 89.2,37 Q97,37 102.3,31.6 V25.7 H90.5 V18.9 H111 V36.1 Q104,44.3 89.2,44.3 Q67.4,44.3 67.4,22.5 Q67.4,0.7 81,0.7 Z" fill="#000"/></svg>
<div class="a" style="left:310.7px;top:1056.3px;width:118.7px;height:58.2px;box-shadow:0 1px 3px rgba(0,0,0,.45),0 0 1px rgba(0,0,0,.3)"></div><svg style="left:310.7px;top:1056.3px" width="118.7" height="58.2" viewBox="0 0 118.7 58.2" ><rect x="0" y="0" width="118.7" height="58.2" fill="url(#pvg)"/><rect x="0.25" y="0.25" width="118.2" height="57.7" fill="none" stroke="#d0d0d0" stroke-width="0.5"/><rect x="2.5" y="1.65" width="113.50" height="1.7" fill="#868686"/><rect x="2.5" y="41.35" width="113.50" height="1.7" fill="#868686"/><rect x="2.5" y="54.95" width="113.50" height="1.7" fill="#868686"/><path d="M29.2,3.2 Q41,25 53.3,55.4 Q41,46 29.2,47.7 Q17,47.7 5.2,53.6 Q17,27 29.2,3.2 Z M29.7,26.5 A7.5,7.5 0 1 0 29.71,26.5 Z" fill="#000" fill-rule="evenodd"/><path d="M103.7,10.4 A22.5,22.5 0 1 0 107,40" fill="none" stroke="#000" stroke-width="6.5" stroke-linecap="round"/><ellipse cx="104.4" cy="35" rx="7.8" ry="7" fill="#000"/></svg>
<div class="a" style="left:530.6px;top:1030.6px;width:119px;height:109.7px;box-shadow:0 1px 3px rgba(0,0,0,.45),0 0 1px rgba(0,0,0,.3)"></div><svg style="left:530.6px;top:1030.6px" width="119" height="109.7" viewBox="0 0 119 109.7" ><rect x="0" y="0" width="119" height="109.7" fill="url(#pvg)"/><rect x="0.25" y="0.25" width="118.5" height="109.2" fill="none" stroke="#d0d0d0" stroke-width="0.5"/><rect x="4.6" y="3.55" width="109.20" height="1.7" fill="#868686"/><rect x="4.6" y="78.95" width="109.20" height="1.7" fill="#868686"/><rect x="4.6" y="104.25" width="109.20" height="1.7" fill="#868686"/><g fill="none" stroke="#000" stroke-width="4.6" stroke-linecap="round" stroke-linejoin="round"><path d="M6.7,77.9 Q20,70 35,45 Q46,25 52.8,12.8 Q44,40 41.5,60 Q40,77 47,77.5 H51.8"/><path d="M20,61 Q38,55 56.9,54.8"/><path d="M101,48.2 Q105,30 94.8,29.7 Q80,30 68,48 Q60,65 67,73 Q77,80 92,63 L97.9,55.9 Q85,80 72,92 Q58,105 57,100 Q55,94 68,86 Q95,75 118.4,60"/></g></svg>
<div class="a" style="left:755.6px;top:1038.5px;width:109px;height:94px;border-radius:4px;box-shadow:0 1px 3px rgba(0,0,0,.35)"></div><svg style="left:755.6px;top:1038.5px" width="109" height="94" viewBox="0 0 109 94" ><rect x="0" y="0" width="109" height="94" rx="4" fill="#0a0a0a"/><rect x="6.6" y="6.5" width="94.8" height="80.6" fill="#272727"/><text x="13.5" y="24" font-family="Liberation Sans" font-size="18" fill="#3ee04a">exec</text></svg>
<div class="a" style="left:975.4px;top:1038.5px;width:109px;height:94px;border-radius:4px;box-shadow:0 1px 3px rgba(0,0,0,.35)"></div><svg style="left:975.4px;top:1038.5px" width="109" height="94" viewBox="0 0 109 94" ><rect x="0" y="0" width="109" height="94" rx="4" fill="#0a0a0a"/><rect x="6.6" y="6.5" width="94.8" height="80.6" fill="#272727"/><text x="13.5" y="24" font-family="Liberation Sans" font-size="18" fill="#3ee04a">exec</text></svg>
<div class="a" style="left:1190.6px;top:1031.7px;width:119px;height:107.1px;box-shadow:0 1px 3px rgba(0,0,0,.45),0 0 1px rgba(0,0,0,.3)"></div><svg style="left:1190.6px;top:1031.7px" width="119" height="107.1" viewBox="0 0 119 107.1" ><rect x="0" y="0" width="119" height="107.1" fill="url(#pvg)"/><rect x="0.25" y="0.25" width="118.5" height="106.6" fill="none" stroke="#d0d0d0" stroke-width="0.5"/><rect x="2.6" y="1.55" width="113.80" height="1.7" fill="#868686"/><rect x="2.6" y="81.65" width="113.80" height="1.7" fill="#868686"/><rect x="2.6" y="100.15" width="113.80" height="1.7" fill="#868686"/><path d="M31.8,27.7 C20,40 4.6,52 4.6,67.2 C4.6,76 10,81.5 18,81.5 C24,81.5 28,79 31.8,75 C35.5,79 40,81.5 46,81.5 C54,81.5 59,76 59,67.2 C59,52 44,40 31.8,27.7 Z" fill="#000"/><path d="M31.8,59.5 C29,53.5 18,53.5 18,62.5 C18,69 25,75 31.8,82 C38.5,75 45.6,69 45.6,62.5 C45.6,53.5 34.5,53.5 31.8,59.5 Z" fill="#fff"/><path d="M31.8,61 C30.5,63 28,64.5 28,66.5 C28,68 30,68.5 31.8,67 C33.5,68.5 35.5,68 35.5,66.5 C35.5,64.5 33,63 31.8,61 Z" fill="#000"/><path d="M62,54.8 Q78,36 96.9,28.2 Q104,26.5 109.2,28.2 Q115.5,31 115.3,37.4 Q115,41.5 110,41.5 Q103,41 96.9,42.5 Q87,45 75.4,54.8 Q81,63 86.6,65.1 Q92,68 96.9,67.7 Q102,67 102,61 Q101.5,56 93.8,54.8 Q104,53 109,57 Q115.8,61 115.8,67 Q115.8,81.5 96.9,81.5 Q86,81 76.4,72.3 Z" fill="#000"/><path d="M91,55 L95.5,52.5 L95.5,57.5 Z" fill="#000"/></svg>
<div class="lb" style="left:238.6px;top:268.45px;letter-spacing:0.98px">accent.ttf</div>
<div class="lb" style="left:458.6px;top:268.45px;letter-spacing:0.85px">Acorn.ttf</div>
<div class="lb" style="left:678.6px;top:268.45px;letter-spacing:0.77px">Actual otf</div>
<div class="lb" style="left:898.6px;top:268.45px;letter-spacing:0.52px">Akura Popo.otf</div>
<div class="lb" style="left:1118.6px;top:268.45px;letter-spacing:0.64px">Akura Popo.ttf</div>
<div class="lb" style="left:238.6px;top:492.45px;letter-spacing:0.69px">aqua.ttf</div>
<div class="lb" style="left:458.6px;top:492.45px;letter-spacing:-0.41px">AROMA</div>
<div class="lb" style="left:678.6px;top:492.45px;letter-spacing:0.58px">Axe Lined.ttf</div>
<div class="lb" style="left:898.6px;top:492.45px;letter-spacing:0.58px">Axe Solid.ttf</div>
<div class="lb" style="left:1118.6px;top:492.45px;letter-spacing:-0.80px">BARN</div>
<div class="lb" style="left:238.6px;top:716.45px;letter-spacing:0.92px">bosun03.otf</div>
<div class="lb" style="left:458.6px;top:716.45px;letter-spacing:0.87px">Bourbon.ttf</div>
<div class="lb" style="left:678.6px;top:716.45px;letter-spacing:0.41px">Building_Typeface</div>
<div class="lb" style="left:898.6px;top:716.45px;letter-spacing:0.88px">Butcher.ttf</div>
<div class="lb" style="left:1118.6px;top:716.45px;letter-spacing:0.79px">Chanfrada.ttf</div>
<div class="lb" style="left:238.6px;top:940.45px;letter-spacing:0.30px">CHASING TAIL.ttf</div>
<div class="lb" style="left:458.6px;top:940.45px;letter-spacing:0.96px">Chomp.ttf</div>
<div class="lb" style="left:678.6px;top:940.45px;letter-spacing:0.56px">comic-neue-1.1</div>
<div class="lb" style="left:898.6px;top:940.45px;letter-spacing:0.73px">dayak shield.ttf</div>
<div class="lb" style="left:1118.6px;top:940.45px;letter-spacing:0.60px">Derkon Serif.otf</div>
<div class="lb" style="left:678.6px;top:748.45px;letter-spacing:0.53px">.ttf</div>
</div></body></html>
